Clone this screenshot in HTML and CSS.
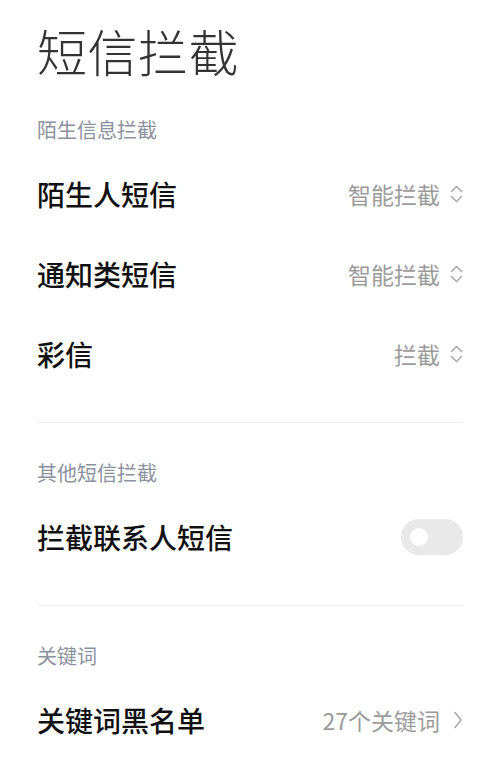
FILE: index.html
```html
<!DOCTYPE html>
<html lang="zh-CN">
<head>
<meta charset="utf-8">
<link rel="stylesheet" href="styles.css">
</head>
<body>
<div class="page">
  <h1 class="title">短信拦截</h1>

  <section class="section first">
    <div class="section-head">陌生信息拦截</div>
    <div class="row">
      <span class="label">陌生人短信</span>
      <span class="value">智能拦截<svg class="updown" width="13" height="20" viewBox="0 0 13 20"><path d="M1.5 7.5 L6.5 2.5 L11.5 7.5 M1.5 12.5 L6.5 17.5 L11.5 12.5" fill="none" stroke="#a8a8a8" stroke-width="1.5" stroke-linecap="round" stroke-linejoin="round"/></svg></span>
    </div>
    <div class="row">
      <span class="label">通知类短信</span>
      <span class="value">智能拦截<svg class="updown" width="13" height="20" viewBox="0 0 13 20"><path d="M1.5 7.5 L6.5 2.5 L11.5 7.5 M1.5 12.5 L6.5 17.5 L11.5 12.5" fill="none" stroke="#a8a8a8" stroke-width="1.5" stroke-linecap="round" stroke-linejoin="round"/></svg></span>
    </div>
    <div class="row">
      <span class="label">彩信</span>
      <span class="value">拦截<svg class="updown" width="13" height="20" viewBox="0 0 13 20"><path d="M1.5 7.5 L6.5 2.5 L11.5 7.5 M1.5 12.5 L6.5 17.5 L11.5 12.5" fill="none" stroke="#a8a8a8" stroke-width="1.5" stroke-linecap="round" stroke-linejoin="round"/></svg></span>
    </div>
  </section>

  <div class="divider"></div>

  <section class="section">
    <div class="section-head">其他短信拦截</div>
    <div class="row">
      <span class="label">拦截联系人短信</span>
      <span class="switch"><span class="knob"></span></span>
    </div>
  </section>

  <div class="divider"></div>

  <section class="section">
    <div class="section-head">关键词</div>
    <div class="row">
      <span class="label">关键词黑名单</span>
      <span class="value">27个关键词<svg class="arrow" width="10" height="20" viewBox="0 0 10 20"><path d="M2 2.5 L8 10 L2 17.5" fill="none" stroke="#a8a8a8" stroke-width="1.5" stroke-linecap="round" stroke-linejoin="round"/></svg></span>
    </div>
  </section>
</div>
</body>
</html>
```
FILE: styles.css
```css
html, body {
  margin: 0;
  padding: 0;
  background: #ffffff;
}

body {
  font-family: "Noto Sans CJK SC", "Noto Sans", "DejaVu Sans", sans-serif;
  width: 500px;
  height: 758px;
  overflow: hidden;
}

.page {
  padding: 20px 37px 0 37px;
}

.title {
  margin: 0;
  font-size: 50px;
  line-height: 60px;
  font-weight: 300;
  color: #333333;
  letter-spacing: 0.5px;
}

.section {
  padding-top: 35px;
}

.section.first {
  padding-top: 35px;
}

.section-head {
  font-size: 20px;
  line-height: 30px;
  color: #8c919e;
  margin-bottom: 9px;
}

.row {
  height: 80px;
  display: flex;
  align-items: center;
  justify-content: space-between;
}

.label {
  font-size: 28px;
  font-weight: 500;
  color: #111111;
}

.value {
  display: flex;
  align-items: center;
  font-size: 23px;
  color: #9b9b9b;
}

.updown {
  margin-left: 10px;
}

.arrow {
  margin-left: 13px;
}

.divider {
  margin-top: 28px;
  height: 1px;
  background: #eeeeee;
}

.switch {
  width: 62px;
  height: 36px;
  border-radius: 18px;
  background: #e9e9e9;
  display: flex;
  align-items: center;
  padding-left: 9px;
  box-sizing: border-box;
}

.knob {
  width: 18px;
  height: 18px;
  border-radius: 50%;
  background: #ffffff;
}
```
